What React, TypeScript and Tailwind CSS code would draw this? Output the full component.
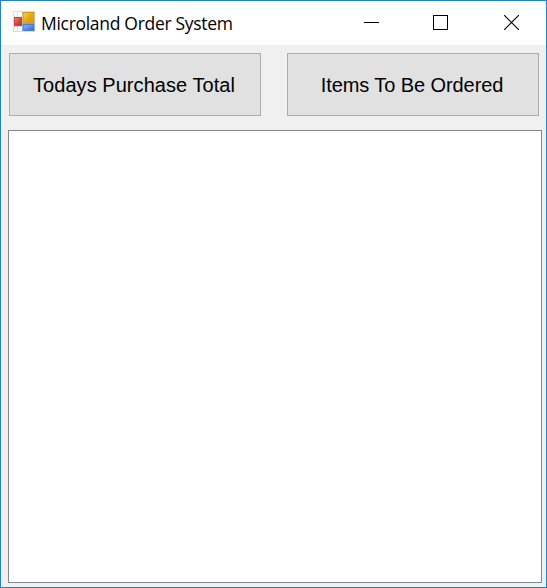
import React from "react";

function AppIcon() {
  return (
    <svg className="mt-px block shrink-0" width="22" height="21" viewBox="0 0 22 21">
      <defs>
        <linearGradient id="gold" x1="0" y1="0" x2="1" y2="1">
          <stop offset="0" stopColor="#f3d676" />
          <stop offset="0.45" stopColor="#e5ad16" />
          <stop offset="1" stopColor="#d89700" />
        </linearGradient>
        <linearGradient id="red" x1="0" y1="0" x2="1" y2="1">
          <stop offset="0" stopColor="#ea8f86" />
          <stop offset="0.5" stopColor="#d94a40" />
          <stop offset="1" stopColor="#b92a24" />
        </linearGradient>
        <linearGradient id="blue" x1="0" y1="0" x2="1" y2="1">
          <stop offset="0" stopColor="#8db4fa" />
          <stop offset="0.5" stopColor="#5f90ee" />
          <stop offset="1" stopColor="#2d62cf" />
        </linearGradient>
      </defs>
      <rect width="22" height="21" fill="#dcdcdc" />
      <rect x="1" y="1" width="3" height="4.5" fill="#fff" />
      <rect x="5" y="1" width="4" height="4.5" fill="#fff" />
      <rect x="1" y="16" width="3" height="4" fill="#fff" />
      <rect x="5" y="16" width="4" height="4" fill="#fff" />
      <rect x="1.5" y="6.5" width="7" height="8" fill="url(#red)" stroke="#c3453b" />
      <rect x="10" y="1.5" width="11" height="11" fill="url(#gold)" stroke="#cc9a22" />
      <rect x="10" y="13.5" width="11" height="6" fill="url(#blue)" stroke="#4c7cd8" />
    </svg>
  );
}

function TitleBar() {
  return (
    <header className="flex h-11 shrink-0 items-start bg-white pl-3 pr-[27px]">
      <div className="pt-[9px]">
        <AppIcon />
      </div>
      <h1 className="ml-[6px] mt-[10px] whitespace-nowrap font-['Open_Sans','Noto_Sans',sans-serif] text-[17.5px] leading-6 tracking-[-0.3px] text-black">
        Microland Order System
      </h1>
      <div className="ml-auto mt-[14px] flex">
        <button aria-label="Minimize" className="block">
          <svg className="block" width="15" height="15" shapeRendering="crispEdges">
            <path d="M0 7.5H15" stroke="#000" />
          </svg>
        </button>
        <button aria-label="Maximize" className="ml-[54px] block">
          <svg className="block" width="15" height="15" shapeRendering="crispEdges">
            <rect x="0.5" y="0.5" width="14" height="14" fill="none" stroke="#000" />
          </svg>
        </button>
        <button aria-label="Close" className="ml-14 block">
          <svg className="block" width="15" height="15">
            <path d="M0 0L15 15M15 0L0 15" stroke="#000" strokeWidth="1.1" />
          </svg>
        </button>
      </div>
    </header>
  );
}

export default function App() {
  return (
    <div className="flex h-[588px] w-[547px] flex-col border border-[#1883d7] bg-[#f0f0f0]">
      <TitleBar />
      <main className="flex flex-1 flex-col pb-1 pl-[7px] pr-1 pt-2">
        <div className="flex gap-[26px] pl-px font-['Liberation_Sans',Arial,sans-serif] text-[20px] text-black">
          <button className="h-[63px] w-[252px] whitespace-nowrap border border-[#adadad] bg-[#e1e1e1] pr-[2px] tracking-[0.05px]">
            Todays Purchase Total
          </button>
          <button className="h-[63px] w-[252px] whitespace-nowrap border border-[#adadad] bg-[#e1e1e1] pr-[2px] tracking-[-0.08px]">
            Items To Be Ordered
          </button>
        </div>
        <div className="mt-[14px] flex-1 border border-[#828790] bg-white" />
      </main>
    </div>
  );
}
